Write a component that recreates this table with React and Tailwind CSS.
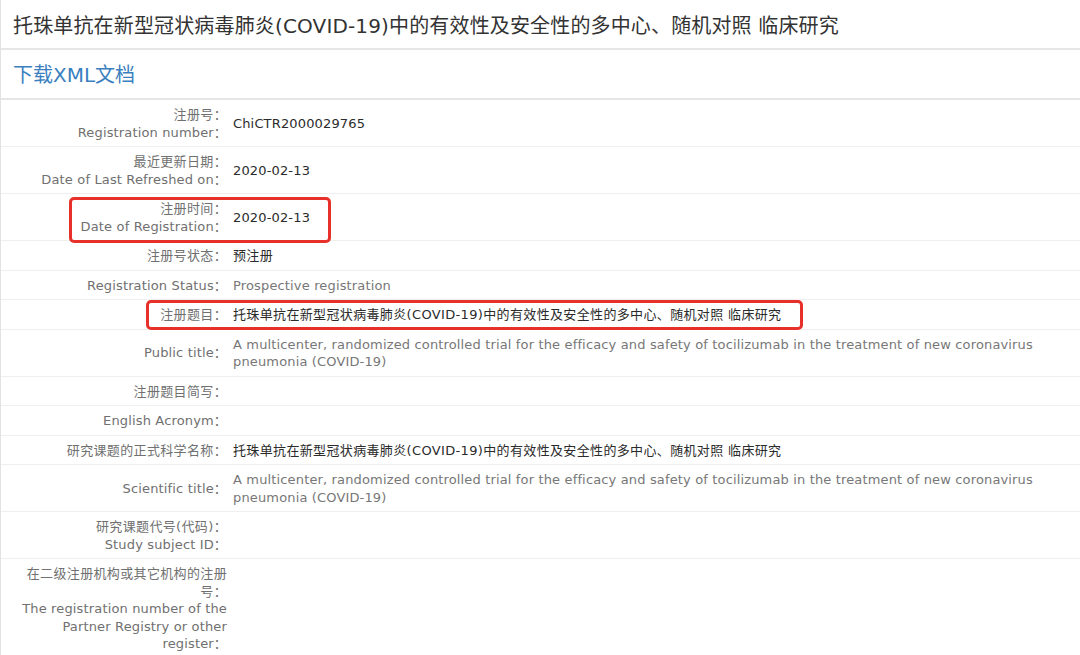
import React from 'react';

const CN_TITLE = '托珠单抗在新型冠状病毒肺炎(COVID-19)中的有效性及安全性的多中心、随机对照 临床研究';
const EN_TITLE =
  'A multicenter, randomized controlled trial for the efficacy and safety of tocilizumab in the treatment of new coronavirus pneumonia (COVID-19)';

const rows = [
  { label: ['注册号：', 'Registration number：'], value: 'ChiCTR2000029765', dark: true },
  { label: ['最近更新日期：', 'Date of Last Refreshed on：'], value: '2020-02-13', dark: true },
  { label: ['注册时间：', 'Date of Registration：'], value: '2020-02-13', dark: true, box: 'date' },
  { label: ['注册号状态：'], value: '预注册', dark: true },
  { label: ['Registration Status：'], value: 'Prospective registration' },
  { label: ['注册题目：'], value: CN_TITLE, dark: true, box: 'title' },
  { label: ['Public title：'], value: EN_TITLE },
  { label: ['注册题目简写：'], value: '' },
  { label: ['English Acronym：'], value: '' },
  { label: ['研究课题的正式科学名称：'], value: CN_TITLE, dark: true },
  { label: ['Scientific title：'], value: EN_TITLE },
  { label: ['研究课题代号(代码)：', 'Study subject ID：'], value: '' },
  {
    label: ['在二级注册机构或其它机构的注册号：', 'The registration number of the Partner Registry or other register：'],
    value: '',
  },
];

// chinese text in the screenshot runs a bit wider than Noto CJK
const isCn = (s) => /[\u4e00-\u9fff]/.test(s);
const track = (s) => (isCn(s) ? 'tracking-[0.35px]' : 'tracking-[0.15px]');

const Row = ({ row }) => (
  <div className="relative flex items-center border-b border-[#efefef] pt-[6px] pb-[5px] text-[13px] leading-[17.5px]">
    <div className="w-[226px] shrink-0 pl-[18px] text-right text-[#707070]">
      {row.label.map((l) => (
        <div key={l} className={track(l)}>
          {l}
        </div>
      ))}
    </div>
    <div className={`pl-[6px] pr-[30px] ${track(row.value)} ${row.dark ? 'text-[#2b2b2b]' : 'text-[#777]'}`}>
      {row.value || '\u00a0'}
    </div>
    {row.box === 'date' && (
      <div className="absolute left-[68px] top-[3px] h-[46px] w-[262px] rounded-[5px] border-[3px] border-[#e8302b]" />
    )}
    {row.box === 'title' && (
      <div className="absolute left-[145px] top-[0px] h-[30px] w-[657px] rounded-[5px] border-[3px] border-[#e8302b]" />
    )}
  </div>
);

export default function App() {
  return (
    <div className="min-h-screen bg-white font-['DejaVu_Sans','Noto_Sans_CJK_SC',sans-serif]">
      <div className="border-l border-[#e2e2e2]">
        <div className="flex h-[50px] items-center border-b-2 border-[#e6e6e6] px-3 pt-[3px] text-[20px] tracking-[0.15px] text-[#333]">
          {CN_TITLE}
        </div>
        <div className="flex h-[50px] items-center border-b-2 border-[#e6e6e6] px-3 pt-[2px] text-[20px] text-[#3a7fc0]">
          下载XML文档
        </div>
        {rows.map((row, i) => (
          <Row key={i} row={row} />
        ))}
      </div>
    </div>
  );
}
